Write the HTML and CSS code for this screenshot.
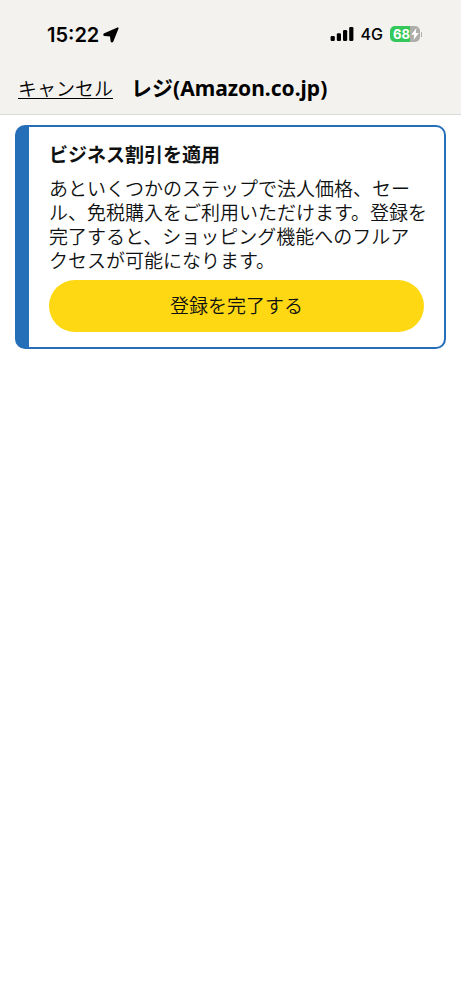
FILE: index.html
```
<!DOCTYPE html>
<html lang="ja">
<head>
<meta charset="utf-8">
<meta name="viewport" content="width=device-width, initial-scale=1">
<title>レジ(Amazon.co.jp)</title>
<link rel="stylesheet" href="styles.css">
</head>
<body>
<header class="top">
  <div class="status">
    <div class="clock">
      <span>15:22</span>
      <svg class="arrow" viewBox="0 0 16 16" width="16" height="16" aria-hidden="true"><path d="M14.8 1.2 9.6 14.2q-.7 1.2-1.2 0L7.7 8.6 1.6 8.2q-1.2-.5 0-1.3z" stroke="#000" stroke-width="1.6" stroke-linejoin="round"/></svg>
    </div>
    <div class="signals">
      <svg viewBox="0 0 24 16" width="24" height="16" aria-hidden="true"><rect x="0.6" y="10" width="4.2" height="5" rx="1.2"/><rect x="6.8" y="7.3" width="4.2" height="7.7" rx="1.2"/><rect x="13" y="4" width="4.2" height="11" rx="1.2"/><rect x="19.2" y="1" width="4.2" height="14" rx="1.2"/></svg>
      <span class="network">4G</span>
      <div class="battery">
        <span>68</span>
        <svg viewBox="0 0 8 12" width="8" height="12" aria-hidden="true"><path d="M5.4 0 .2 6.8h3L2.6 12 7.8 5H4.8z" fill="#fff"/></svg>
      </div>
    </div>
  </div>
  <nav class="bar">
    <a class="cancel" href="#">キャンセル</a>
    <h1 class="title">レジ(Amazon.co.jp)</h1>
  </nav>
</header>
<main class="content">
  <section class="card">
    <h2 class="heading">ビジネス割引を適用</h2>
    <p class="text">あといくつかのステップで法人価格、セール、免税購入をご利用いただけます。登録を<br>完了すると、ショッピング機能へのフルア<br>クセスが可能になります。</p>
    <button class="action" type="button">登録を完了する</button>
  </section>
</main>
</body>
</html>
```
FILE: styles.css
```
* { box-sizing: border-box; }
body {
  margin: 0;
  background: #fff;
  color: #0f1111;
  font-family: "Noto Sans CJK JP", sans-serif;
  font-size: 19px;
  font-weight: 350;
}
.top {
  background: #f3f2ee;
  border-bottom: 1px solid #d8dad9;
  color: #000;
}
.status {
  display: flex;
  justify-content: space-between;
  align-items: center;
  height: 68px;
  padding: 0 41px 0 47px;
  font-family: Inter, sans-serif;
}
.clock {
  display: flex;
  align-items: center;
  gap: 4px;
  padding-top: 1px;
  font-size: 20px;
  font-weight: 600;
}
.signals {
  display: flex;
  align-items: center;
  gap: 7px;
}
.network { font-size: 16px; font-weight: 450; }
.battery {
  position: relative;
  display: flex;
  align-items: center;
  gap: 1px;
  width: 30px;
  height: 16px;
  padding-left: 3px;
  border-radius: 5px;
  background: linear-gradient(90deg, #34c759 68%, #adadaa 68%);
  color: #fff;
  font-size: 13px;
  font-weight: 700;
}
.battery::after {
  content: "";
  position: absolute;
  left: 31px;
  top: 6px;
  width: 1px;
  height: 5px;
  border-radius: 1px;
  background: #adadaa;
}
.bar {
  display: flex;
  align-items: baseline;
  gap: 18px;
  padding: 4px 18px 10px;
}
.cancel {
  color: inherit;
  line-height: 24px;
  text-decoration-thickness: 1px;
  text-underline-offset: 2px;
}
.title {
  margin: 0;
  font-family: "Noto Sans", "Noto Sans CJK JP", sans-serif;
  font-size: 21px;
  line-height: 32px;
  font-weight: 700;
}
.content { padding: 10px 15px; }
.card {
  border: 2px solid #256fb8;
  border-left-width: 14px;
  border-radius: 10px;
  padding: 15px 12px 15px 20px;
}
.heading {
  margin: 0 0 10px;
  font-size: 19px;
  line-height: 24px;
  font-weight: 700;
}
.text { margin: 0 0 8px; line-height: 24px; }
.action {
  display: block;
  width: calc(100% - 8px);
  height: 52px;
  padding: 0 0 3px;
  border: 0;
  border-radius: 26px;
  background: #ffd814;
  color: inherit;
  font: inherit;
  cursor: pointer;
}
```
